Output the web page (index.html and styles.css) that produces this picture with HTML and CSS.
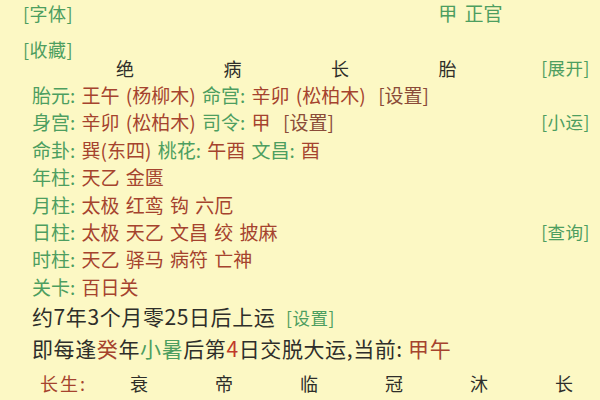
FILE: index.html
```html
<!DOCTYPE html>
<html lang="zh-CN">
<head>
<meta charset="utf-8">
<link rel="stylesheet" href="styles.css">
</head>
<body>
<div class="page">
  <div class="top-row">
    <span class="link g">[字体]</span>
    <span class="shishen g">甲 正官</span>
  </div>
  <div class="fav-row"><span class="link g">[收藏]</span></div>
  <div class="stage-row">
    <div class="stages">
      <span class="stage">绝</span>
      <span class="stage">病</span>
      <span class="stage">长</span>
      <span class="stage last">胎</span>
    </div>
    <span class="side g">[展开]</span>
  </div>

  <div class="rows">
    <div class="row"><span class="txt"><span class="g">胎元:</span> <span class="r">王午 (杨柳木)</span> <span class="g">命宫:</span> <span class="r">辛卯 (松柏木)</span>&nbsp; <span class="b">[设置]</span></span></div>
    <div class="row"><span class="txt"><span class="g">身宫:</span> <span class="r">辛卯 (松柏木)</span> <span class="g">司令:</span> <span class="r">甲</span>&nbsp; <span class="b">[设置]</span></span><span class="side g">[小运]</span></div>
    <div class="row"><span class="txt"><span class="g">命卦:</span> <span class="r">巽(东四)</span> <span class="g">桃花:</span> <span class="r">午酉</span> <span class="g">文昌:</span> <span class="r">酉</span></span></div>
    <div class="row"><span class="txt"><span class="g">年柱:</span> <span class="r">天乙 金匮</span></span></div>
    <div class="row"><span class="txt"><span class="g">月柱:</span> <span class="r">太极 红鸾 钩 六厄</span></span></div>
    <div class="row"><span class="txt"><span class="g">日柱:</span> <span class="r">太极 天乙 文昌 绞 披麻</span></span><span class="side g">[查询]</span></div>
    <div class="row"><span class="txt"><span class="g">时柱:</span> <span class="r">天乙 驿马 病符 亡神</span></span></div>
    <div class="row"><span class="txt"><span class="g">关卡:</span> <span class="r">百日关</span></span></div>
  </div>

  <div class="yun">
    <div class="yun-row">约7年3个月零25日后上运 &nbsp;<span class="g set">[设置]</span></div>
    <div class="yun-row">即每逢<span class="r">癸</span>年<span class="g">小暑</span>后第<span class="r4">4</span>日交脱大运,当前: <span class="r">甲午</span></div>
  </div>

  <div class="cs-row">
    <span class="cs-label r">长生:</span>
    <span class="cs">衰</span>
    <span class="cs">帝</span>
    <span class="cs">临</span>
    <span class="cs">冠</span>
    <span class="cs">沐</span>
    <span class="cs last">长</span>
  </div>
</div>
</body>
</html>
```
FILE: styles.css
```css
html, body {
  margin: 0;
  padding: 0;
  background: #fcf8c4;
}
.page {
  width: 600px;
  height: 400px;
  overflow: hidden;
  font-family: "Noto Sans CJK SC", "Noto Sans", sans-serif;
  color: #3a3a33;
  font-size: 18px;
  white-space: nowrap;
}
.g { color: #4d9e60; }
.r { color: #a5432e; }
.r4 { color: #c0392b; }
.b { color: #8a4b38; }

.top-row {
  height: 26px;
  line-height: 26px;
  display: flex;
  padding-left: 23px;
  padding-right: 20px;
}
.link {
  font-size: 18px;
  letter-spacing: 0.5px;
}
.shishen {
  margin-left: 365px;
  font-size: 19px;
  word-spacing: 3px;
}
.fav-row {
  margin-top: 13px;
  height: 20px;
  line-height: 20px;
  padding-left: 23px;
}
.stage-row {
  height: 18px;
  line-height: 18px;
  display: flex;
  justify-content: space-between;
  padding-right: 10px;
}
.stages {
  display: flex;
  padding-left: 116px;
}
.stage {
  width: 107.5px;
  flex-shrink: 0;
  color: #2e2e2a;
}
.stage.last { width: auto; }
.side {
  font-size: 17.5px;
  letter-spacing: 0.5px;
  flex-shrink: 0;
}
.rows {
  margin-top: 4px;
}
.row {
  height: 27.4px;
  line-height: 27.4px;
  display: flex;
  justify-content: space-between;
  padding-left: 32px;
  padding-right: 10px;
}
.txt {
  font-size: 19px;
  word-spacing: 2px;
}
.yun {
  margin-top: 0;
  padding-left: 32px;
}
.yun-row {
  height: 32px;
  line-height: 32px;
  font-size: 21px;
  letter-spacing: 0.6px;
  color: #2e2e2a;
}
.yun-row .set {
  font-size: 17.5px;
  letter-spacing: 0.5px;
}
.cs-row {
  margin-top: 4px;
  height: 30px;
  line-height: 30px;
  display: flex;
  padding-left: 40px;
  font-size: 18px;
}
.cs-label {
  width: 90px;
  flex-shrink: 0;
  letter-spacing: 2px;
}
.cs {
  width: 85px;
  flex-shrink: 0;
  color: #2e2e2a;
}
.cs.last { width: auto; }
```
